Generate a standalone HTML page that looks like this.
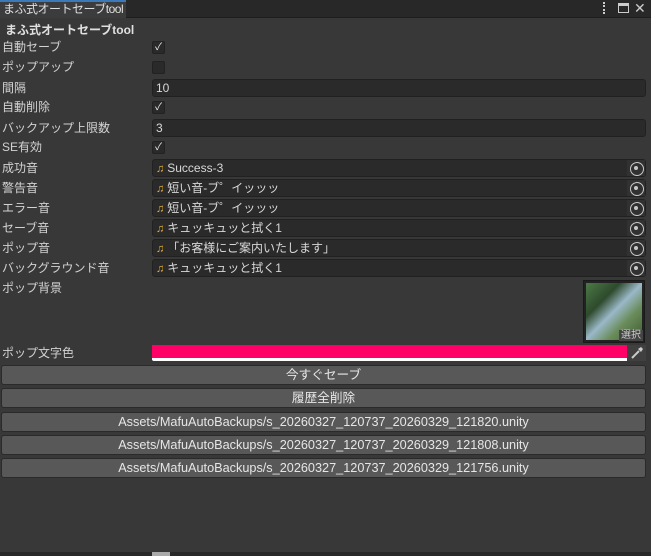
<!DOCTYPE html>
<html><head><meta charset="utf-8"><style>
*{box-sizing:border-box;margin:0;padding:0}
body{width:651px;height:556px;background:#383838;font-family:"Liberation Sans","Noto Sans CJK JP",sans-serif;font-size:12px;color:#d2d2d2;position:relative;overflow:hidden}
.bar{position:absolute;left:0;top:0;width:651px;height:18px;background:#282828;border-bottom:1px solid #1e1e1e}
.tab{position:absolute;left:0;top:0;width:126px;height:18px;background:#3c3c3c;border-top:2px solid #3a79bb;font-size:12px;line-height:15px;padding-left:3px;color:#e0e0e0;white-space:nowrap;letter-spacing:-0.5px;overflow:hidden}
.a{position:absolute;white-space:nowrap}
.lbl{position:absolute;left:2px;line-height:14px}
.chk{position:absolute;left:152px;width:13px;height:13px;background:#2a2a2a;border:1px solid #222;border-radius:2px;color:#eee;font-size:10px;line-height:11px;text-align:center}
.fld{position:absolute;left:152px;width:494px;height:18px;background:#2a2a2a;border:1px solid #212121;border-radius:3px;line-height:16px;padding-left:3px;color:#d8d8d8;white-space:nowrap}
.obj .n{color:#e8b23a;margin-right:3px;font-size:11px}
.obj .pk{position:absolute;right:0;top:0;width:18px;height:16px;background:#313131;}
.obj .pk:before{content:"";position:absolute;left:3px;top:2px;width:12px;height:12px;border:1.5px solid #c8c8c8;border-radius:50%}
.obj .pk:after{content:"";position:absolute;left:7px;top:6px;width:4px;height:4px;background:#c8c8c8;border-radius:50%}
.btn{position:absolute;left:1px;width:645px;height:20px;background:#585858;border:1px solid #2a2a2a;border-radius:3px;text-align:center;line-height:18px;color:#e6e6e6;font-size:12.7px;white-space:nowrap}
</style></head><body>
<div class="bar"></div>
<div class="tab">まふ式オートセーブtool</div>
<div class="a" style="left:603px;top:2px;width:3px;height:12px;border-left:2px dotted #ccc"></div>
<div class="a" style="left:618px;top:3px;width:11px;height:10px;border:1px solid #ccc;border-top:3px solid #ccc"></div>
<div class="a" style="left:634px;top:0px;font-size:14px;color:#ccc">✕</div>
<div class="a" style="left:5px;top:21px;font-weight:bold;color:#e0e0e0">まふ式オートセーブtool</div>

<div class="lbl" style="top:40px">自動セーブ</div><div class="chk" style="top:41px">✓</div>
<div class="lbl" style="top:60px">ポップアップ</div><div class="chk" style="top:61px"></div>
<div class="lbl" style="top:81px">間隔</div><div class="fld" style="top:79px">10</div>
<div class="lbl" style="top:100px">自動削除</div><div class="chk" style="top:101px">✓</div>
<div class="lbl" style="top:121px">バックアップ上限数</div><div class="fld" style="top:119px">3</div>
<div class="lbl" style="top:140px">SE有効</div><div class="chk" style="top:141px">✓</div>

<div class="lbl" style="top:161px">成功音</div><div class="fld obj" style="top:159px"><span class="n">♫</span>Success-3<div class="pk"></div></div>
<div class="lbl" style="top:181px">警告音</div><div class="fld obj" style="top:179px"><span class="n">♫</span>短い音-ブ゜イッッッ<div class="pk"></div></div>
<div class="lbl" style="top:201px">エラー音</div><div class="fld obj" style="top:199px"><span class="n">♫</span>短い音-ブ゜イッッッ<div class="pk"></div></div>
<div class="lbl" style="top:221px">セーブ音</div><div class="fld obj" style="top:219px"><span class="n">♫</span>キュッキュッと拭く1<div class="pk"></div></div>
<div class="lbl" style="top:241px">ポップ音</div><div class="fld obj" style="top:239px"><span class="n">♫</span>「お客様にご案内いたします」<div class="pk"></div></div>
<div class="lbl" style="top:261px">バックグラウンド音</div><div class="fld obj" style="top:259px"><span class="n">♫</span>キュッキュッと拭く1<div class="pk"></div></div>
<div class="lbl" style="top:281px">ポップ背景</div>
<div class="a" style="left:583px;top:280px;width:62px;height:63px;background:#222;border:1px solid #1a1a1a">
 <div style="position:absolute;left:2px;top:2px;width:56px;height:57px;background:linear-gradient(135deg,#4c7a46 0%,#2e4a2c 30%,#9ab8c8 50%,#6a8c5a 70%,#3d5a30 100%)"></div>
 <div style="position:absolute;right:1px;bottom:1px;background:#444;color:#ccc;font-size:10px;padding:0 2px;line-height:11px">選択</div>
</div>
<div class="lbl" style="top:346px">ポップ文字色</div>
<div class="a" style="left:152px;top:345px;width:475px;height:16px;background:#fff;border-radius:2px 0 0 2px"><div style="height:13px;background:#ff0066"></div></div>
<div class="a" style="left:627px;top:345px;width:19px;height:16px;background:#404040">
<svg width="19" height="16" viewBox="0 0 19 16"><path d="M5 13 L12 6" stroke="#ccc" stroke-width="2"/><path d="M11 4 L14 2 L16 4 L14 7 Z" fill="#ccc"/></svg></div>

<div class="btn" style="top:365px">今すぐセーブ</div>
<div class="btn" style="top:388px">履歴全削除</div>
<div class="btn" style="top:412px">Assets/MafuAutoBackups/s_20260327_120737_20260329_121820.unity</div>
<div class="btn" style="top:435px">Assets/MafuAutoBackups/s_20260327_120737_20260329_121808.unity</div>
<div class="btn" style="top:458px">Assets/MafuAutoBackups/s_20260327_120737_20260329_121756.unity</div>

<div class="a" style="left:0;top:552px;width:651px;height:4px;background:#282828"></div>
<div class="a" style="left:152px;top:552px;width:18px;height:4px;background:#aaa"></div>
</body></html>
